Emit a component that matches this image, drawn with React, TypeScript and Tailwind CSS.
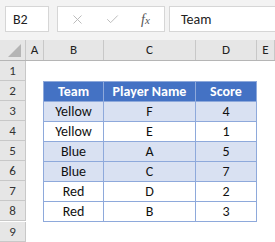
import { X, Check } from 'lucide-react';

const cols = [
  { key: 'A', w: 'w-[18px]' },
  { key: 'B', w: 'w-[60px]' },
  { key: 'C', w: 'w-[92px]' },
  { key: 'D', w: 'w-[61px]' },
  { key: 'E', w: 'flex-1' },
];

const rows = [
  { team: 'Yellow', player: 'F', score: 4, band: true },
  { team: 'Yellow', player: 'E', score: 1, band: false },
  { team: 'Blue', player: 'A', score: 5, band: true },
  { team: 'Blue', player: 'C', score: 7, band: true },
  { team: 'Red', player: 'D', score: 2, band: false },
  { team: 'Red', player: 'B', score: 3, band: false },
];

const font = { fontFamily: 'Calibri, Carlito, "Open Sans", "Liberation Sans", sans-serif' };

function RowHead({ n }: { n: number }) {
  return (
    <div className="w-[26px] h-[20px] shrink-0 bg-[#e6e6e6] border-r border-b border-[#c8c8c8] flex items-center justify-center text-[13px] text-[#333]">
      {n}
    </div>
  );
}

export default function App() {
  return (
    <div className="w-[275px] h-[242px] overflow-hidden bg-white" style={font}>
      {/* formula bar */}
      <div className="h-[40px] bg-[#f3f3f3] flex items-start pt-[6px] pl-[5px]">
        <div className="w-[44px] h-[26px] bg-white border border-[#d6d6d6] flex items-center pl-[7px] text-[14px] text-[#222]">
          B2
        </div>
        <div className="ml-[8px] w-[108px] h-[26px] bg-white border border-[#d6d6d6] flex items-center pl-[12px] text-[#b8b8b8]">
          <X size={15} strokeWidth={1.5} />
          <Check size={15} strokeWidth={1.5} className="ml-[20px]" />
          <span
            className="ml-[21px] text-[14px] italic text-[#555]"
            style={{ fontFamily: '"Liberation Serif", serif' }}
          >
            f<span className="text-[11px]">x</span>
          </span>
        </div>
        <div className="ml-[4px] flex-1 h-[26px] bg-white border border-r-0 border-[#d6d6d6] flex items-center pl-[11px] text-[14px] text-[#222]">
          Team
        </div>
      </div>

      {/* column headers */}
      <div className="flex h-[21px] bg-[#e6e6e6] border-b border-[#b5b5b5]">
        <div className="relative w-[26px] shrink-0 border-r border-[#c8c8c8]">
          <div className="absolute right-[4px] bottom-[3px] w-0 h-0 border-l-[13px] border-l-transparent border-b-[13px] border-b-[#b4b4b4]" />
        </div>
        {cols.map((c) => (
          <div
            key={c.key}
            className={`${c.w} shrink-0 border-r border-[#c8c8c8] flex items-center justify-center text-[13px] text-[#222]`}
          >
            {c.key}
          </div>
        ))}
      </div>

      {/* row 1 */}
      <div className="flex">
        <RowHead n={1} />
      </div>

      {/* row 2: table header */}
      <div className="flex">
        <RowHead n={2} />
        <div className="w-[17px] shrink-0" />
        <div className="flex h-[20px] bg-[#4472c4] border border-[#8ea9db] border-b-0 text-white font-bold text-[14px]">
          <div className="w-[60px] flex items-center justify-center border-r border-[#8ea9db]">Team</div>
          <div className="w-[92px] flex items-center justify-center border-r border-[#8ea9db]">Player Name</div>
          <div className="w-[60px] flex items-center justify-center">Score</div>
        </div>
      </div>

      {rows.map((r, i) => (
        <div key={i} className="flex">
          <RowHead n={i + 3} />
          <div className="w-[17px] shrink-0" />
          <div
            className={`flex h-[20px] border-x border-t border-[#8ea9db] text-[14px] text-[#111] ${
              r.band ? 'bg-[#d9e1f2]' : 'bg-white'
            } ${i === rows.length - 1 ? 'border-b h-[21px]' : ''}`}
          >
            <div className="w-[60px] flex items-center justify-center border-r border-[#8ea9db]">{r.team}</div>
            <div className="w-[92px] flex items-center justify-center border-r border-[#8ea9db]">{r.player}</div>
            <div className="w-[60px] flex items-center justify-center">{r.score}</div>
          </div>
        </div>
      ))}

      <div className="flex">
        <RowHead n={9} />
      </div>
    </div>
  );
}
